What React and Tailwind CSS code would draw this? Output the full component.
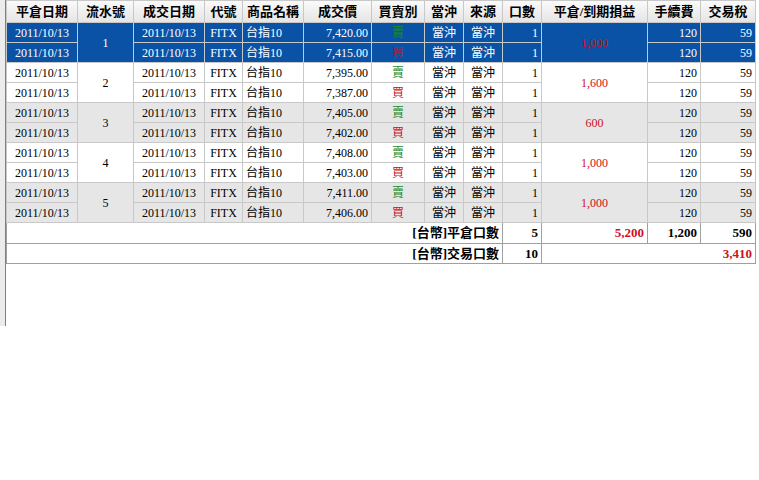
import React from "react";

const groups = [
  { n: 1, pl: "1,000", rows: [["7,420.00", "賣"], ["7,415.00", "買"]], sel: true },
  { n: 2, pl: "1,600", rows: [["7,395.00", "賣"], ["7,387.00", "買"]] },
  { n: 3, pl: "600", rows: [["7,405.00", "賣"], ["7,402.00", "買"]], gray: true },
  { n: 4, pl: "1,000", rows: [["7,408.00", "賣"], ["7,403.00", "買"]] },
  { n: 5, pl: "1,000", rows: [["7,411.00", "賣"], ["7,406.00", "買"]], gray: true },
];
const widths = [71, 56, 71, 38, 61, 68, 53, 39, 39, 39, 106, 53, 55];
const heads = ["平倉日期", "流水號", "成交日期", "代號", "商品名稱", "成交價", "買賣別", "當沖", "來源", "口數", "平倉/到期損益", "手續費", "交易稅"];

export default function App() {
  const td = "border border-[#c8c8c8] h-[20px] px-[3px] text-[12px] leading-none whitespace-nowrap";
  return (
    <div className="w-[759px] h-[480px] bg-white" style={{ fontFamily: "'Liberation Serif','Noto Sans CJK TC',serif" }}>
      <div className="h-[326px] w-[759px] bg-[#ececec] pl-[5px]">
        <div className="h-full bg-white border-l border-[#808080]">
          <table className="border-collapse table-fixed" style={{ width: 750 }}>
            <colgroup>{widths.map((w, i) => <col key={i} style={{ width: w }} />)}</colgroup>
            <thead>
              <tr className="bg-gradient-to-b from-[#fafafa] to-[#e4e4e4]">
                {heads.map((h) => (
                  <th key={h} className="border border-[#c8c8c8] h-[22px] text-[13px] font-bold text-black text-center">{h}</th>
                ))}
              </tr>
            </thead>
            <tbody>
              {groups.map((g) =>
                g.rows.map((r, i) => {
                  const bg = g.sel ? "bg-[#0a52a6] text-white" : g.gray ? "bg-[#e6e6e6] text-black" : "bg-white text-black";
                  const bcol = g.sel ? "border-[#7ea2d0]" : "";
                  return (
                    <tr key={g.n + "-" + i} className={bg}>
                      <td className={`${td} ${bcol} text-center`}>2011/10/13</td>
                      {i === 0 && <td rowSpan={2} className={`${td} ${bcol} text-center`}>{g.n}</td>}
                      <td className={`${td} ${bcol} text-center`}>2011/10/13</td>
                      <td className={`${td} ${bcol} text-center`}>FITX</td>
                      <td className={`${td} ${bcol} text-left`}>台指10</td>
                      <td className={`${td} ${bcol} text-right`}>{r[0]}</td>
                      <td className={`${td} ${bcol} text-center ${r[1] === "賣" ? "text-[#1a8a2a]" : "text-[#d01020]"}`}>{r[1]}</td>
                      <td className={`${td} ${bcol} text-center`}>當沖</td>
                      <td className={`${td} ${bcol} text-center`}>當沖</td>
                      <td className={`${td} ${bcol} text-right`}>1</td>
                      {i === 0 && <td rowSpan={2} className={`${td} ${bcol} text-center text-[#d01020]`}>{g.pl}</td>}
                      <td className={`${td} ${bcol} text-right`}>120</td>
                      <td className={`${td} ${bcol} text-right`}>59</td>
                    </tr>
                  );
                })
              )}
              <tr className="font-bold text-[13px]">
                <td colSpan={9} className="border border-[#a0a0a0] h-[20px] px-[3px] text-right">[台幣]平倉口數</td>
                <td className="border border-[#a0a0a0] px-[3px] text-right">5</td>
                <td className="border border-[#a0a0a0] px-[3px] text-right text-[#d01020]">5,200</td>
                <td className="border border-[#a0a0a0] px-[3px] text-right">1,200</td>
                <td className="border border-[#a0a0a0] px-[3px] text-right">590</td>
              </tr>
              <tr className="font-bold text-[13px]">
                <td colSpan={9} className="border border-[#a0a0a0] h-[20px] px-[3px] text-right">[台幣]交易口數</td>
                <td className="border border-[#a0a0a0] px-[3px] text-right">10</td>
                <td colSpan={3} className="border border-[#a0a0a0] px-[3px] text-right text-[#d01020]">3,410</td>
              </tr>
            </tbody>
          </table>
        </div>
      </div>
    </div>
  );
}
